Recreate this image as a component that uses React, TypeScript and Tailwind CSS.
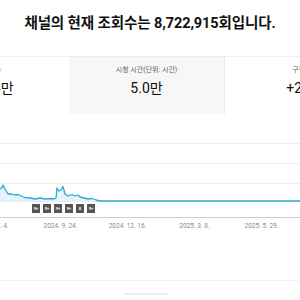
import React from "react";

const pts: [number, number][] = [
  [0, 75], [2, 73.5], [3, 71], [5, 75], [8, 80], [12, 80], [15, 81], [18, 80.5], [22, 82.5], [25, 83.5],
  [30, 84], [35, 85], [40, 84], [45, 85], [50, 84.5], [54, 85], [56, 84], [57, 74], [59, 77], [61, 76],
  [63, 72.5], [65, 80], [68, 82], [72, 80.5], [75, 82], [78, 81], [80, 83], [84, 84], [88, 85],
  [92, 84.5], [96, 86], [100, 87], [300, 87],
];

const linePath = pts.map((p, i) => `${i === 0 ? "M" : "L"}${p[0]} ${p[1]}`).join(" ");
const areaPath = `${linePath} L300 87 L0 87 Z`;

const markers = ["9+", "9+", "9+", "9+", "8", "9+"];
const dates = ["2024. 7. 4.", "2024. 9. 24.", "2024. 12. 16.", "2025. 3. 8.", "2025. 5. 29.", "2025. 8. 19."];

export default function App() {
  return (
    <div
      className="w-[300px] h-[300px] overflow-hidden bg-white"
      style={{ fontFamily: 'Roboto, "Noto Sans CJK KR", sans-serif' }}
    >
      <div className="h-[56px] flex justify-center pt-[14px]">
        <div className="text-[14.5px] leading-[20px] font-bold text-[#111] whitespace-nowrap tracking-[-0.1px]">
          채널의 현재 조회수는 8,722,915회입니다.
        </div>
      </div>

      <div className="border-t border-[#efefef] overflow-hidden">
        <div className="flex -ml-[86px] w-[465px]">
          <div className="w-[155px] h-[57px] shrink-0 flex flex-col items-center pt-[9px]">
            <div className="text-[7px] leading-[9px] text-[#606060]">조회수</div>
            <div className="text-[14px] leading-[18px] text-[#0d0d0d] mt-[4px] pl-[4px]">12.4만</div>
          </div>
          <div className="w-[155px] h-[57px] shrink-0 flex flex-col items-center pt-[9px] bg-[#f7f7f7]">
            <div className="text-[7px] leading-[9px] text-[#606060]">시청 시간(단위: 시간)</div>
            <div className="text-[14px] leading-[18px] text-[#0d0d0d] mt-[4px]">5.0만</div>
          </div>
          <div className="w-[155px] h-[57px] shrink-0 flex flex-col items-center pt-[9px] border-l border-[#eaeaea]">
            <div className="text-[7px] leading-[9px] text-[#606060]">구독자</div>
            <div className="text-[14px] leading-[18px] text-[#0d0d0d] mt-[4px]">+253</div>
          </div>
        </div>
      </div>

      <div className="relative h-[104px]">
        <svg width="300" height="104" viewBox="0 0 300 104" className="block">
          <line x1="0" y1="29.5" x2="300" y2="29.5" stroke="#ececec" strokeWidth="1" />
          <line x1="0" y1="49.5" x2="300" y2="49.5" stroke="#ececec" strokeWidth="1" />
          <line x1="0" y1="69.5" x2="300" y2="69.5" stroke="#ececec" strokeWidth="1" />
          <line x1="0" y1="87.5" x2="300" y2="87.5" stroke="#ececec" strokeWidth="1" />
          <path d={areaPath} fill="#e3f3fa" />
          <path d={linePath} fill="none" stroke="#2ea8d6" strokeWidth="1.3" strokeLinejoin="round" />
          <line x1="0" y1="103.5" x2="300" y2="103.5" stroke="#cfcfcf" strokeWidth="1" />
        </svg>
        <div className="absolute left-[32px] top-[90px] flex gap-[3px]">
          {markers.map((m, i) => (
            <div
              key={i}
              className="w-[8px] h-[9px] bg-[#555] flex items-center justify-center text-[4px] leading-none text-white font-bold"
            >
              {m}
            </div>
          ))}
        </div>
      </div>

      <div className="flex -ml-[40px] w-[402px] mt-[4px]">
        {dates.map((d) => (
          <div key={d} className="w-[67px] shrink-0 text-center text-[6.5px] leading-[9px] text-[#8a8a8a] whitespace-nowrap">
            {d}
          </div>
        ))}
      </div>

      <div className="mt-[49px] border-t border-[#f3f3f3]" />
      <div className="mt-[12px] mx-auto ml-[125px] w-[43px] h-[2px] bg-[#eeeeee]" />
    </div>
  );
}
